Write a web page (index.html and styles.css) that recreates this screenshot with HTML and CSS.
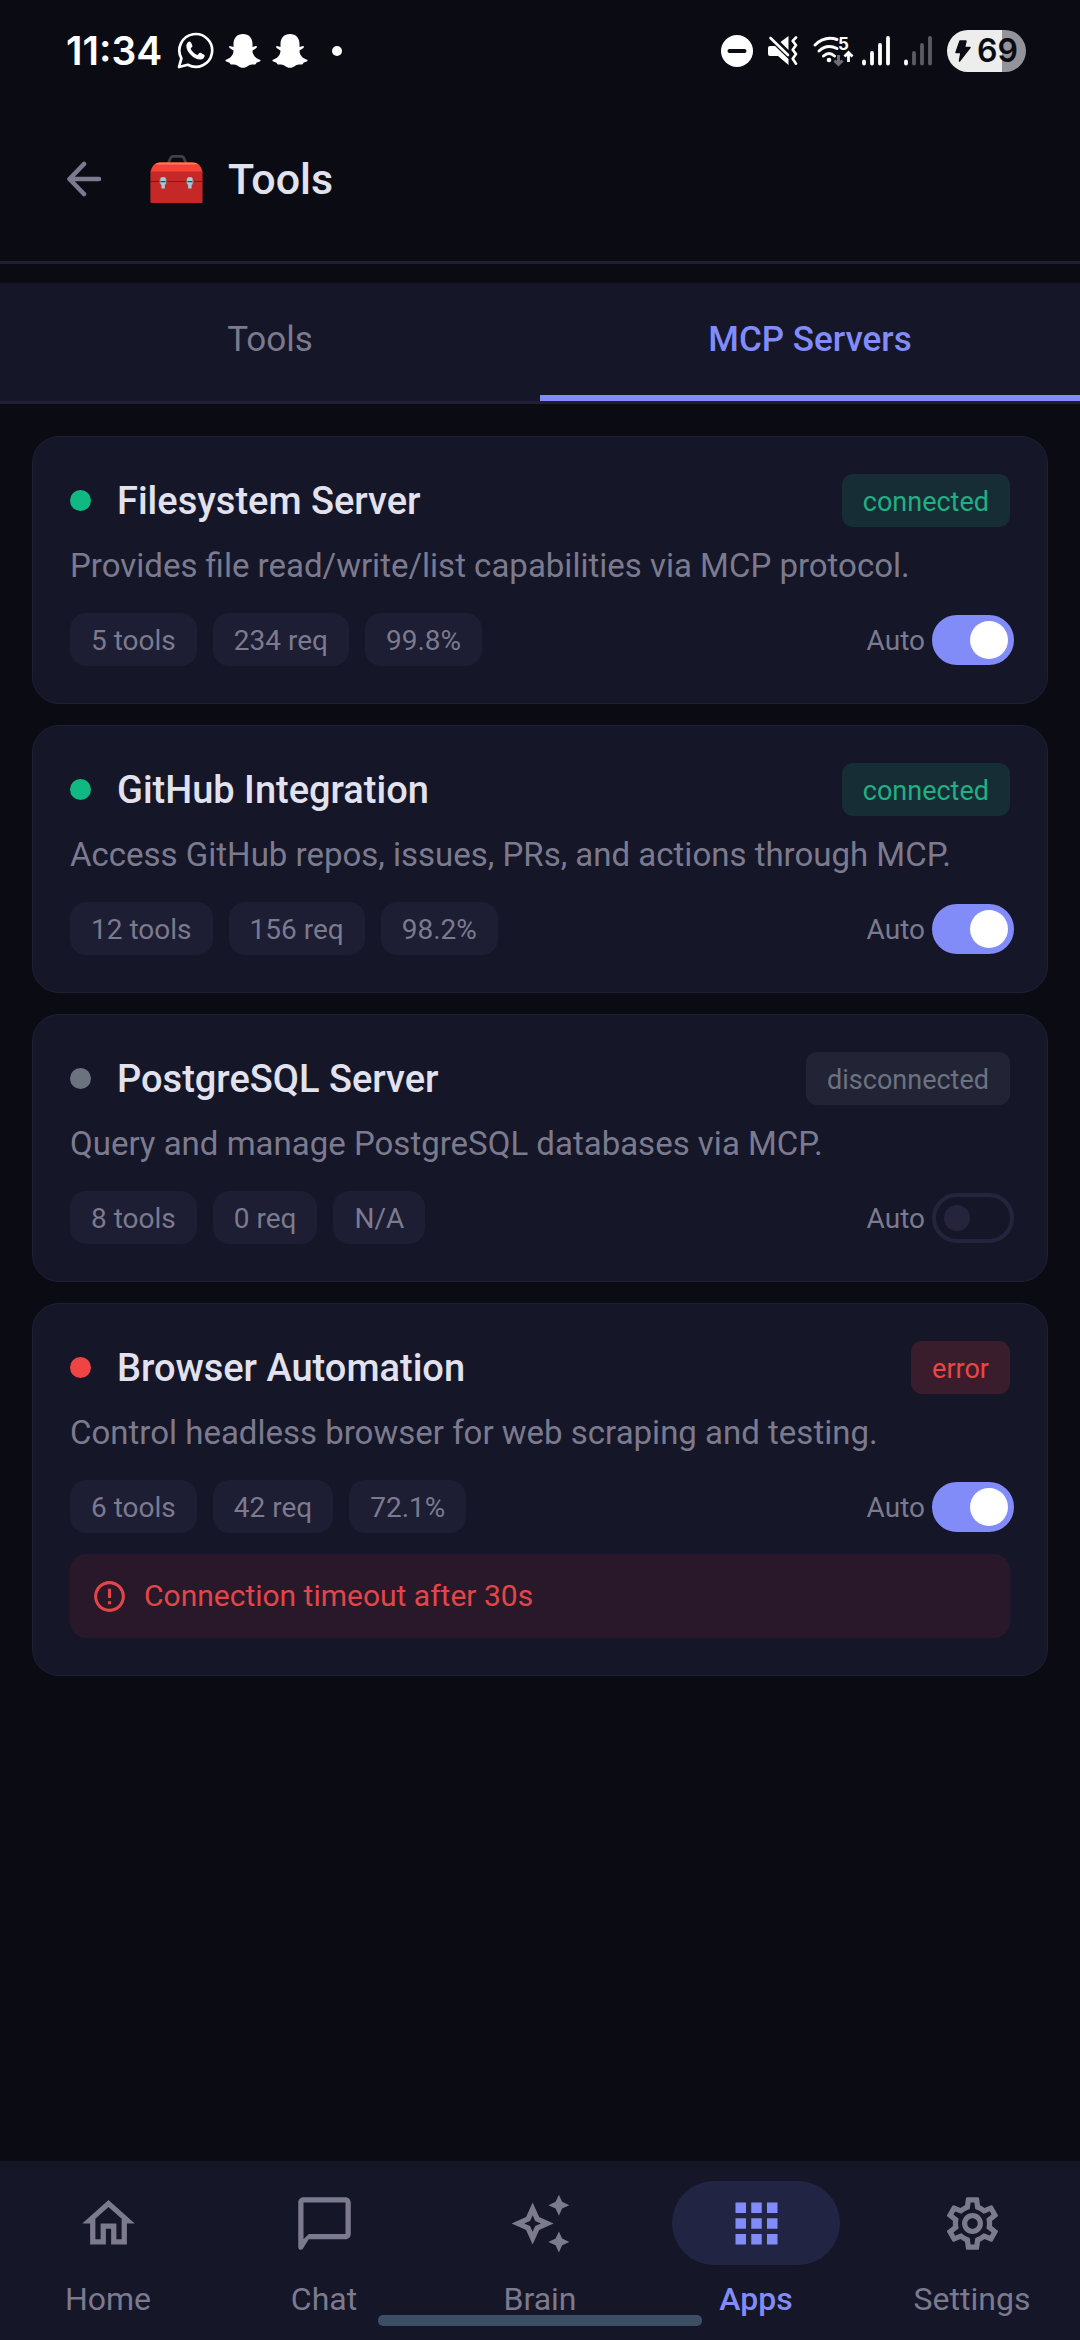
FILE: index.html
```html
<!DOCTYPE html>
<html lang="en">
<head>
    <meta charset="UTF-8">
    <meta name="viewport" content="width=device-width, initial-scale=1.0">
    <title>Tools</title>
    <link rel="stylesheet" href="styles.css">
</head>
<body>
    <div class="status-bar">
        <div class="status-left">
            <span class="clock">11:34</span>
            <svg class="whatsapp" width="37" height="37" viewBox="0 0 37 37">
                <path d="M2 35l2.4-8.6A16.4 16.4 0 1 1 10.800 32.800z" fill="none" stroke="#fff" stroke-width="2.700" stroke-linejoin="round"/>
                <path d="M12.500 9.500c-1 0-3.200 1.800-3.200 4.500 0 6 8 13.600 13.700 13.600 2.600 0 4.700-2 4.700-4.200 0-.6-4.200-2.900-4.900-2.700-.8.200-1.900 2.500-2.700 2.300-2.100-.6-5.500-3.800-6.300-6.200-.2-.8 1.700-1.700 1.700-2.700 0-.8-1.600-4.600-3-4.600z" fill="#fff"/>
            </svg>
            <svg class="snap" width="36" height="34" viewBox="0 0 36 34">
                <path d="M18 0c6 0 9.500 4 9.500 10v3c1.500 0 3.500-1.700 4.300-.4.800 1.500-2.700 2.800-4.300 3.900 0 5 3.500 8 8 9.500.8 1.700-2.500 2-4 2.700-.8 1.800-1.300 2-4.500 1.700-3.500 0-5 3.400-9 3.400s-5.500-3.400-9-3.400c-3.200.3-3.700.1-4.500-1.700-1.500-.7-4.800-1-4-2.700 4.500-1.500 8-4.500 8-9.500-1.600-1.100-5.100-2.400-4.300-3.900.8-1.300 2.800.4 4.300.4v-3C8.500 4 12 0 18 0z" fill="#fff"/>
            </svg>
            <svg class="snap" width="36" height="34" viewBox="0 0 36 34">
                <path d="M18 0c6 0 9.500 4 9.500 10v3c1.500 0 3.500-1.700 4.300-.4.800 1.500-2.700 2.800-4.300 3.900 0 5 3.500 8 8 9.500.8 1.700-2.500 2-4 2.700-.8 1.800-1.300 2-4.500 1.700-3.500 0-5 3.400-9 3.400s-5.500-3.400-9-3.400c-3.200.3-3.700.1-4.500-1.700-1.500-.7-4.800-1-4-2.700 4.500-1.500 8-4.500 8-9.500-1.600-1.100-5.100-2.400-4.300-3.900.8-1.300 2.800.4 4.300.4v-3C8.500 4 12 0 18 0z" fill="#fff"/>
            </svg>
            <span class="more-dot"></span>
        </div>
        <div class="status-right">
            <svg class="dnd" width="32" height="32" viewBox="0 0 32 32">
                <circle cx="16" cy="16" r="16" fill="#fff"/>
                <path d="M8.500 16h15" stroke="#0b0b14" stroke-width="4" stroke-linecap="round"/>
            </svg>
            <svg class="mute" width="30" height="30" viewBox="0 0 30 30">
                <path d="M0 12q0-2 2-2h5L20.500 23v6L10 20H2q-2 0-2-2zM12.500 6l8-6v14z" fill="#fff"/>
                <path d="M2.500 2L20 19" stroke="#fff" stroke-width="2.600" stroke-linecap="round"/>
                <path d="M28 1.500l-3.300 3.400 3.300 4.300-3.300 4.500 3.300 4.400-3.300 4.600 3.300 5" fill="none" stroke="#fff" stroke-width="2.600" stroke-linecap="round" stroke-linejoin="round"/>
            </svg>
            <svg class="wifi" width="41" height="30" viewBox="0 0 41 30">
                <g fill="none" stroke="#fff" stroke-width="3" stroke-linecap="round">
                    <path d="M2 9Q12-.5 24 3.500"/>
                    <path d="M6 15q8-7.500 18-2.500"/>
                    <path d="M10.500 20q5.500-5 11 0"/>
                </g>
                <circle cx="16" cy="24" r="2.300" fill="#fff"/>
                <path d="M25.500 19v9m-4-3.500l4 4 4-4" fill="none" stroke="#6d6d75" stroke-width="3"/>
                <path d="M35.500 26V16.500m-4 4l4-4 4 4" fill="none" stroke="#fff" stroke-width="2.800"/>
                <text class="band" x="25" y="14">5</text>
            </svg>
            <svg class="signal" width="28" height="30" viewBox="0 0 28 30">
                <path d="M2 25.500v2M10 17v10.500M18 9v18.500M26 2v25.500" stroke="#fff" stroke-width="3.800" stroke-linecap="round"/>
            </svg>
            <svg class="signal-weak" width="28" height="30" viewBox="0 0 28 30">
                <path d="M10 17v10.500M18 9v18.500M26 2v25.500" stroke="#5b5b63" stroke-width="3.800" stroke-linecap="round"/>
                <path d="M2 25.500v2" stroke="#fff" stroke-width="3.800" stroke-linecap="round"/>
            </svg>
            <div class="battery">
                <svg class="bolt" width="16" height="22" viewBox="0 0 16 22"><path d="M5 1h6L9.500 7.500H15L4.500 21 6 12.500H1z" fill="#0b0b14" stroke="#0b0b14" stroke-width="1.500" stroke-linejoin="round"/></svg>
                <span>69</span>
            </div>
        </div>
    </div>

    <header class="header">
        <button class="back" aria-label="Back">
            <svg width="36" height="36" viewBox="0 0 36 36"><path d="M18 3L3.500 18 18 33M3.500 18H33" fill="none" stroke="currentColor" stroke-width="4.600" stroke-linecap="round" stroke-linejoin="round"/></svg>
        </button>
        <svg class="toolbox" width="53" height="48" viewBox="0 0 152 140">
            <path d="M52 24l6-14q2-6 9-6h22q7 0 9 6l6 14" fill="none" stroke="#424242" stroke-width="8"/>
            <path d="M0 50Q6 22 26 22H126Q146 22 152 50z" fill="#f44336"/>
            <path d="M14 28Q20 22 28 22H124Q132 22 138 28z" fill="#ff7a55"/>
            <path d="M0 48H152V136q0 4-4 4H4q-4 0-4-4z" fill="#c62828"/>
            <path d="M0 77.500H152" stroke="#9d0a0a" stroke-width="3"/>
            <circle cx="37" cy="77" r="12" fill="#8e5a5e"/>
            <circle cx="115" cy="77" r="12" fill="#8e5a5e"/>
            <path d="M29 70q0-6 8-6t8 6v14l-3 3v11H32V87l-3-3z" fill="#a3cad6"/>
            <path d="M107 70q0-6 8-6t8 6v14l-3 3v11h-10V87l-3-3z" fill="#a3cad6"/>
            <path d="M30 77.500h14M108 77.500h14" stroke="#37474f" stroke-width="4"/>
        </svg>
        <h1>Tools</h1>
    </header>

    <div class="tabs" role="tablist">
        <button class="tab" role="tab" aria-selected="false">Tools</button>
        <button class="tab active" role="tab" aria-selected="true">MCP Servers</button>
    </div>

    <main class="servers">
        <section class="card">
            <div class="card-head">
                <span class="dot green"></span>
                <h2>Filesystem Server</h2>
                <span class="badge connected">connected</span>
            </div>
            <p>Provides file read/write/list capabilities via MCP protocol.</p>
            <div class="card-foot">
                <span class="chip">5 tools</span>
                <span class="chip">234 req</span>
                <span class="chip">99.8%</span>
                <label class="auto" for="auto1">Auto</label>
                <input class="switch" type="checkbox" id="auto1" checked>
            </div>
        </section>

        <section class="card">
            <div class="card-head">
                <span class="dot green"></span>
                <h2>GitHub Integration</h2>
                <span class="badge connected">connected</span>
            </div>
            <p>Access GitHub repos, issues, PRs, and actions through MCP.</p>
            <div class="card-foot">
                <span class="chip">12 tools</span>
                <span class="chip">156 req</span>
                <span class="chip">98.2%</span>
                <label class="auto" for="auto2">Auto</label>
                <input class="switch" type="checkbox" id="auto2" checked>
            </div>
        </section>

        <section class="card">
            <div class="card-head">
                <span class="dot gray"></span>
                <h2>PostgreSQL Server</h2>
                <span class="badge disconnected">disconnected</span>
            </div>
            <p>Query and manage PostgreSQL databases via MCP.</p>
            <div class="card-foot">
                <span class="chip">8 tools</span>
                <span class="chip">0 req</span>
                <span class="chip">N/A</span>
                <label class="auto" for="auto3">Auto</label>
                <input class="switch" type="checkbox" id="auto3">
            </div>
        </section>

        <section class="card">
            <div class="card-head">
                <span class="dot red"></span>
                <h2>Browser Automation</h2>
                <span class="badge error">error</span>
            </div>
            <p>Control headless browser for web scraping and testing.</p>
            <div class="card-foot">
                <span class="chip">6 tools</span>
                <span class="chip">42 req</span>
                <span class="chip">72.1%</span>
                <label class="auto" for="auto4">Auto</label>
                <input class="switch" type="checkbox" id="auto4" checked>
            </div>
            <div class="alert">
                <svg width="37" height="37" viewBox="0 0 24 24"><path fill="currentColor" d="M11 15h2v2h-2zm0-8h2v6h-2zm.99-5C6.470 2 2 6.480 2 12s4.470 10 9.990 10C17.520 22 22 17.520 22 12S17.520 2 11.990 2zM12 20c-4.420 0-8-3.580-8-8s3.580-8 8-8 8 3.580 8 8-3.580 8-8 8z"/></svg>
                <span>Connection timeout after 30s</span>
            </div>
        </section>
    </main>

    <nav class="bottom-nav">
        <a href="#home">
            <span class="nav-icon"><svg viewBox="0 0 24 24"><path d="M12 5.690l5 4.500V18h-2v-6H9v6H7v-7.810l5-4.500M12 3L2 12h3v8h6v-6h2v6h6v-8h3L12 3z"/></svg></span>
            Home
        </a>
        <a href="#chat">
            <span class="nav-icon"><svg viewBox="0 0 24 24"><path d="M20 2H4c-1.100 0-2 .9-2 2v17c0 .9 1.100 1.300 1.700.7L6 18h14c1.100 0 2-.9 2-2V4c0-1.100-.9-2-2-2zm0 14H6l-2 2V4h16v12z"/></svg></span>
            Chat
        </a>
        <a href="#brain">
            <span class="nav-icon"><svg viewBox="0 0 24 24"><path d="M19 9l1.250-2.750L23 5l-2.750-1.250L19 1l-1.250 2.750L15 5l2.750 1.250zM19 15l-1.250 2.750L15 19l2.750 1.250L19 23l1.250-2.750L23 19l-2.750-1.250zM11.500 9.500L9 4 6.500 9.500 1 12l5.500 2.500L9 20l2.500-5.500L17 12l-5.500-2.500zm-1.510 3.490L9 15.170l-.99-2.180L5.830 12l2.180-.99L9 8.830l.99 2.180 2.180.99-2.180.99z"/></svg></span>
            Brain
        </a>
        <a href="#apps" class="current">
            <span class="nav-icon"><svg viewBox="0 0 24 24"><path d="M4 8h4V4H4v4zm6 12h4v-4h-4v4zm-6 0h4v-4H4v4zm0-6h4v-4H4v4zm6 0h4v-4h-4v4zm6-10v4h4V4h-4zm-6 4h4V4h-4v4zm6 6h4v-4h-4v4zm0 6h4v-4h-4v4z"/></svg></span>
            Apps
        </a>
        <a href="#settings">
            <span class="nav-icon"><svg viewBox="0 0 24 24"><path d="M19.430 12.980c.04-.32.07-.64.07-.98 0-.34-.03-.66-.07-.98l2.110-1.650c.19-.15.24-.42.12-.64l-2-3.460c-.09-.16-.26-.25-.44-.25-.06 0-.12.010-.17.030l-2.490 1c-.52-.4-1.080-.73-1.690-.98l-.38-2.650C14.460 2.180 14.250 2 14 2h-4c-.25 0-.46.18-.49.42l-.38 2.650c-.61.25-1.170.59-1.690.98l-2.490-1c-.06-.02-.12-.03-.18-.03-.17 0-.34.09-.43.25l-2 3.460c-.13.22-.07.49.12.64l2.110 1.650c-.04.32-.07.65-.07.98 0 .33.030.66.070.98l-2.110 1.650c-.19.15-.24.42-.12.64l2 3.460c.09.16.26.25.44.25.06 0 .12-.010.17-.030l2.490-1c.52.4 1.080.73 1.690.98l.38 2.650c.030.240.240.420.490.420h4c.25 0 .46-.18.49-.42l.38-2.650c.61-.25 1.170-.59 1.690-.98l2.490 1c.060.020.120.030.180.030.17 0 .34-.09.43-.25l2-3.460c.12-.22.07-.49-.12-.64l-2.110-1.650zm-1.980-1.710c.040.310.050.520.050.730 0 .21-.02.43-.05.73l-.14 1.130.89.7 1.080.84-.7 1.210-1.270-.51-1.040-.42-.9.680c-.43.32-.84.56-1.250.73l-1.060.43-.16 1.130-.2 1.350h-1.400l-.19-1.350-.16-1.130-1.060-.43c-.43-.18-.83-.41-1.230-.71l-.91-.7-1.060.43-1.270.51-.7-1.210 1.080-.84.89-.7-.14-1.130c-.03-.31-.05-.54-.05-.74s.02-.43.05-.73l.14-1.130-.89-.7-1.080-.84.7-1.210 1.270.51 1.040.42.9-.68c.43-.32.84-.56 1.250-.73l1.060-.43.16-1.130.2-1.350h1.390l.19 1.350.16 1.130 1.060.43c.43.18.83.41 1.230.71l.91.7 1.060-.43 1.270-.51.7 1.210-1.070.85-.89.7.14 1.130zM12 8c-2.210 0-4 1.790-4 4s1.790 4 4 4 4-1.790 4-4-1.790-4-4-4zm0 6c-1.100 0-2-.9-2-2s.9-2 2-2 2 .9 2 2-.9 2-2 2z"/></svg></span>
            Settings
        </a>
        <div class="home-bar"></div>
    </nav>
</body>
</html>
```

FILE: styles.css
```css
* {box-sizing: border-box;}
body {margin: 0; min-height: 100vh; display: flex; flex-direction: column; background: #0b0b14; color: #e2e2ee; font-family: Roboto, sans-serif;}
h1, h2, p {margin: 0;}
button {border: 0; background: none; padding: 0; font: inherit; color: inherit;}

/* status bar */
.status-bar {height: 101px; padding: 0 54px 0 66px; display: flex; justify-content: space-between; align-items: center; color: #fff; font-family: Inter, sans-serif;}
.status-left, .status-right {display: flex; align-items: center;}
.clock {font-size: 39px; line-height: 48px; font-weight: 600;}
.whatsapp {margin-left: 15px;}
.snap {margin-left: 11px;}
.more-dot {width: 10px; height: 10px; margin-left: 24px; border-radius: 50%; background: #fff;}
.mute {margin-left: 15px;}
.wifi {margin-left: 15px; overflow: visible;}
.signal {margin-left: 8px;}
.signal-weak {margin-left: 14px;}
.band {font-size: 17px; font-weight: 700; fill: #fff;}
.battery {width: 79px; height: 42px; margin-left: 15px; border-radius: 21px; display: flex; align-items: center; justify-content: center; gap: 6px; background: linear-gradient(to right, #ededed 69%, #939399 69%); color: #0b0b14; font-size: 32px; line-height: 42px; font-weight: 600;}
.bolt {flex: none;}

/* header */
.header {display: flex; align-items: center; padding: 54px 66px 58px; border-bottom: 3px solid #201f36;}
.back {display: flex; color: #7b7a8e;}
.toolbox {margin-left: 48px;}
.header h1 {margin-left: 25px; font-size: 43px; line-height: 48px; font-weight: 500;}

/* tabs */
.tabs {display: flex; margin-top: 19px; background: #151628; border-bottom: 3px solid #201f36;}
.tab {flex: 1; height: 118px; border-top: 2px solid transparent; border-bottom: 6px solid transparent; font-size: 35px; line-height: 40px; color: #7b7a8e;}
.tab.active {border-bottom-color: #818cf8; color: #818cf8; font-weight: 500;}

/* server cards */
.servers {display: flex; flex-direction: column; gap: 21px; padding: 32px;}
.card {padding: 37px; border: 1px solid #201f36; border-radius: 27px; background: #151628;}
.card-head {display: flex; align-items: center;}
.card h2 {flex: 1; margin-left: 26px; font-size: 38px; line-height: 44px; font-weight: 500;}
.card p {margin: 18px 0 26px; font-size: 33px; line-height: 42px; color: #7b7a8e;}
.dot {width: 21px; height: 21px; border-radius: 50%;}
.green {background: #10b981;}
.gray {background: #6b7280;}
.red {background: #ef4444;}
.badge, .chip {padding: 12px 21px 9px; line-height: 32px;}
.badge {border-radius: 11px; font-size: 27px;}
.connected {background: #162d35; color: #20b083;}
.disconnected {background: #232336; color: #6b7280;}
.error {background: #3a1d2d; color: #ef4444;}
.card-foot {display: flex; align-items: center; gap: 16px;}
.chip {border-radius: 16px; background: #1d1d33; color: #7b7a8e; font-size: 28px;}
.auto {margin-left: auto; padding-top: 2px; font-size: 28px; line-height: 32px; color: #7b7a8e;}
.switch {appearance: none; width: 82px; height: 50px; margin: 0 -4px 0 -9px; padding: 0 8px; border: 4px solid #25243c; border-radius: 25px; display: flex; align-items: center;}
.switch::before {content: ""; width: 26px; height: 26px; border-radius: 50%; background: #25243c;}
.switch:checked {padding: 0 2px; border-color: #818cf8; background: #818cf8; justify-content: flex-end;}
.switch:checked::before {width: 38px; height: 38px; background: #fff;}
.alert {display: flex; align-items: center; gap: 16px; margin-top: 21px; padding: 22px 21px; border-radius: 16px; background: #281829; color: #e24648; font-size: 30px; line-height: 40px;}

/* bottom navigation */
.bottom-nav {position: relative; display: flex; margin-top: auto; padding: 20px 0 23px; background: #151628;}
.bottom-nav a {flex: 1; display: flex; flex-direction: column; align-items: center; gap: 16px; font-size: 32px; line-height: 36px; color: #7b7a8e; text-decoration: none;}
.nav-icon {display: flex; align-items: center; justify-content: center; width: 168px; height: 84px; border-radius: 42px;}
.nav-icon svg {width: 63px; height: 63px; fill: currentColor;}
.bottom-nav .current {color: #818cf8; font-weight: 500;}
.current .nav-icon {background: #222443;}
.home-bar {position: absolute; left: 35%; bottom: 14px; width: 30%; height: 11px; border-radius: 5px; background: #3c4e63;}
```
